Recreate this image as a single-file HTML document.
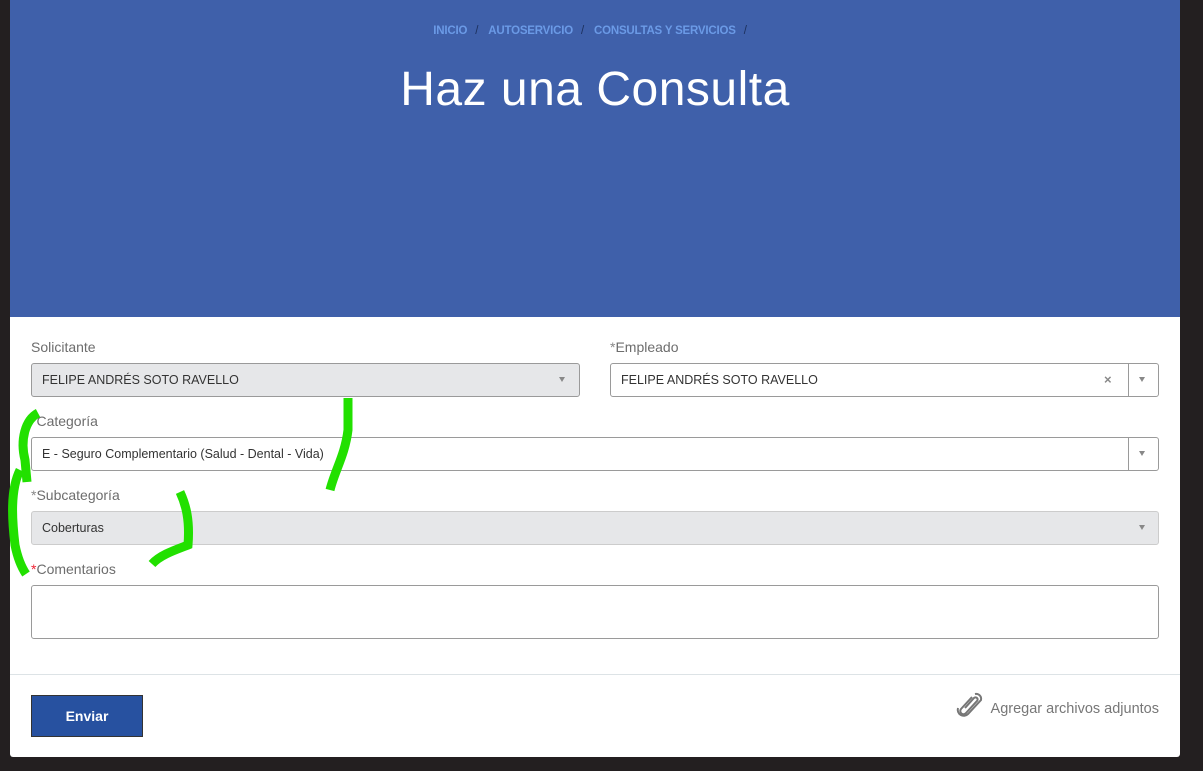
<!DOCTYPE html>
<html><head><meta charset="utf-8"><style>
*{box-sizing:border-box;margin:0;padding:0}
body{width:1203px;height:771px;background:#231f20;position:relative;overflow:hidden;font-family:"Liberation Sans",sans-serif}
.hero{position:absolute;left:10px;top:0;width:1170px;height:318px;background:#3f60aa}
.bc{position:absolute;top:25px;left:0;width:100%;text-align:center;font-size:11.5px;font-weight:bold;color:#6b9ae6;letter-spacing:-0.2px}
.bc span{color:#1c2f5c;margin:0 10px 0 8px;font-weight:normal}
h1{position:absolute;top:62px;left:0;width:100%;text-align:center;color:#fff;font-weight:normal;font-size:48px;letter-spacing:0.5px}
.card{position:absolute;left:10px;top:317px;width:1170px;height:440px;background:#fff;border-radius:0 0 3px 3px}
.lbl{position:absolute;font-size:14px;color:#6d6d6d}
.lbl b{color:#888;font-weight:normal}
.lbl b.r{color:#e23}
.in{position:absolute;border:1px solid #9a9a9a;border-radius:3px;height:34px;font-size:12.5px;color:#333;padding:9px 0 0 10px;background:#fff}
.g{background:#e6e7e9}
.arr{position:absolute;top:13px;width:0;height:0;border-left:3.5px solid transparent;border-right:3.5px solid transparent;border-top:5px solid #888}
.btn{position:absolute;left:21px;top:378px;width:112px;height:42px;background:#2751a0;border:1px solid #333;color:#fff;font-weight:bold;font-size:14px;text-align:center;line-height:40px}
</style></head><body>
<div class="hero">
<div class="bc">INICIO<span>/</span>AUTOSERVICIO<span>/</span>CONSULTAS Y SERVICIOS<span>/</span></div>
<h1>Haz una Consulta</h1>
</div>
<div class="card">
<div class="lbl" style="left:21px;top:22px">Solicitante</div>
<div class="in g" style="left:21px;top:46px;width:549px">FELIPE ANDRÉS SOTO RAVELLO<div class="arr" style="left:527px"></div></div>
<div class="lbl" style="left:600px;top:22px"><b>*</b>Empleado</div>
<div class="in" style="left:600px;top:46px;width:549px">FELIPE ANDRÉS SOTO RAVELLO<span style="position:absolute;left:493px;top:8px;color:#888;font-weight:bold;font-size:13px">×</span><div style="position:absolute;left:517px;top:0;height:32px;border-left:1px solid #9a9a9a"></div><div class="arr" style="left:528px"></div></div>
<div class="lbl" style="left:21px;top:96px"><b>*</b>Categoría</div>
<div class="in" style="left:21px;top:120px;width:1128px">E - Seguro Complementario (Salud - Dental - Vida)<div style="position:absolute;left:1096px;top:0;height:32px;border-left:1px solid #9a9a9a"></div><div class="arr" style="left:1107px"></div></div>
<div class="lbl" style="left:21px;top:170px"><b>*</b>Subcategoría</div>
<div class="in g" style="left:21px;top:194px;width:1128px;border-color:#ccc">Coberturas<div class="arr" style="left:1107px"></div></div>
<div class="lbl" style="left:21px;top:244px"><b class="r">*</b>Comentarios</div>
<div class="in" style="left:21px;top:268px;width:1128px;height:54px"></div>
<div style="position:absolute;left:0;top:357px;width:1170px;border-top:1px solid #dde3e6"></div>
<div class="btn">Enviar</div>
<svg style="position:absolute;left:945px;top:375px" width="28" height="26" viewBox="0 0 28 26"><path d="M17 5 L6 17 a3 3 0 0 0 5 4 L22 9 a2 2 0 0 0 -3 -3 L10 16" fill="none" stroke="#777" stroke-width="2"/><path d="M20 2 a5 5 0 0 1 6 6 L13 22 a6 6 0 0 1 -10 -6" fill="none" stroke="#777" stroke-width="2"/></svg>
<div class="lbl" style="right:21px;top:384px;font-size:14.5px;color:#777">Agregar archivos adjuntos</div>
</div>
<svg style="position:absolute;left:0;top:0" width="1203" height="771"><g fill="none" stroke="#22e000" stroke-width="9" stroke-linecap="butt">
<path d="M38 413 C25 420 20 440 25 460 L27 482"/><path d="M20 470 C10 490 12 520 15 545 C18 560 22 568 26 574"/><path d="M348 398 L348 430 C345 455 335 470 330 490"/><path d="M180 492 C186 505 190 520 188 545 C175 550 160 555 152 564"/></g></svg>
</body></html>
